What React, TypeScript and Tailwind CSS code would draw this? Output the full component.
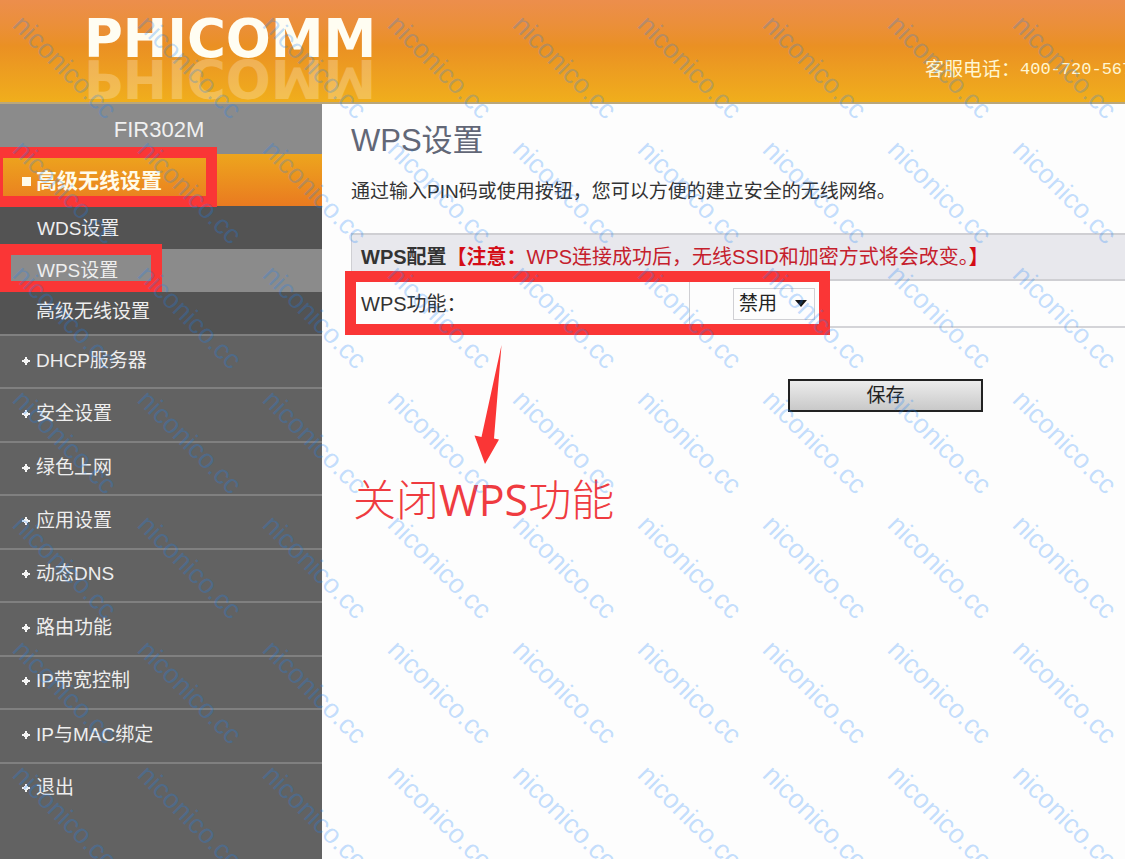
const menu = ['DHCP服务器', '安全设置', '绿色上网', '应用设置', '动态DNS', '路由功能', 'IP带宽控制', 'IP与MAC绑定', '退出'];

const watermarks = Array.from({ length: 63 }, (_, i) => i);

function Logo() {
  return (
    <div className="relative ml-[84px] pt-[14px] font-['DejaVu_Sans',sans-serif] text-[53px] leading-[50px] font-bold text-[#fffdf2]">
      <h1>PHICOMM</h1>
      <div aria-hidden="true" className="absolute left-0 top-[53px] -scale-y-100 opacity-25">
        PHICOMM
      </div>
    </div>
  );
}

function PlusMark() {
  return (
    <svg viewBox="0 0 10 10" className="size-[10px] shrink-0" aria-hidden="true">
      <path d="M4 1h2v2h1v1h2v2H7v1H6v2H4V7H3V6H1V4h2V3h1z" fill="#f4f4f4" />
    </svg>
  );
}

function Sidebar() {
  return (
    <nav className="w-[322px] shrink-0 bg-[#626262] text-[19px] leading-6 text-[#eeeeee]">
      <div className="flex h-[50px] items-center justify-center bg-[#8b8b8b] pt-0.5 pr-1 text-[22px] text-[#f0f0f0]">
        <span>FIR302M</span>
      </div>

      <div className="relative h-[52px] bg-linear-to-b from-[#eda51d] to-[#e97a20]">
        <a href="#wireless" className="flex h-full items-center gap-[5px] pt-0.5 pl-[22px] text-[21px] font-bold text-[#fffbe9]">
          <span className="size-[9px] bg-[#fffbe9]" />
          高级无线设置
        </a>
        <div className="pointer-events-none absolute -top-[7px] left-0 h-[60px] w-[217px] border-[11px] border-l-[3px] border-[#fa3636]" />
      </div>

      <ul className="bg-[#535353]">
        <li>
          <a href="#wds" className="flex h-[43px] items-center pt-0.5 pl-[37px]">WDS设置</a>
        </li>
        <li className="relative bg-[#8b8b8b]">
          <a href="#wps" className="flex h-[43px] items-center pl-[37px]">WPS设置</a>
          <div className="pointer-events-none absolute -top-[5px] left-0 h-[48px] w-[162px] border-[11px] border-[#fa3636]" />
        </li>
        <li>
          <a href="#advanced" className="flex h-[42px] items-center pb-0.5 pl-[36px]">高级无线设置</a>
        </li>
      </ul>

      <ul className="grid min-h-[481px] auto-rows-fr">
        {menu.map((label) => (
          <li key={label} className="border-t-2 border-[#808080]">
            <a href="#menu" className="flex h-full items-center gap-[5px] pb-0.5 pl-[21px]">
              <PlusMark />
              {label}
            </a>
          </li>
        ))}
      </ul>
    </nav>
  );
}

function Content() {
  return (
    <main className="min-w-0 flex-1 pl-[29px] text-[20px] leading-6 text-[#333]">
      <h2 className="pt-[17px] text-[31px] leading-10 text-[#626777]">WPS设置</h2>
      <p className="mt-[19px] text-[19px] whitespace-nowrap">通过输入PIN码或使用按钮，您可以方便的建立安全的无线网络。</p>

      <div className="relative mt-[29px]">
        <table className="w-full border-collapse border-l border-[#cfcfd3]">
          <thead>
            <tr className="h-[46px] border-y-2 border-[#cfcfd3] bg-[#e8e8ed]">
              <th colSpan={2} className="pl-[9px] text-left font-normal whitespace-nowrap text-[#c5202c]">
                <span className="font-bold text-[#333]">WPS配置</span>
                <span className="font-bold text-[#d40d16]">【注意：</span>
                WPS连接成功后，无线SSID和加密方式将会改变。
                <span className="font-bold text-[#d40d16]">】</span>
              </th>
            </tr>
          </thead>
          <tbody>
            <tr className="h-[47px] border-b-2 border-[#d4d4d8]">
              <td className="w-[338px] border-r border-[#cfcfd3] pl-[9px]">
                <label htmlFor="wps">WPS功能：</label>
              </td>
              <td className="pl-[43px]">
                <div className="relative w-[82px]">
                  <select
                    id="wps"
                    className="h-[32px] w-full appearance-none border border-[#d0d0d4] bg-[#fdfdfd] pl-[5px] text-[19px] text-[#222]"
                  >
                    <option>禁用</option>
                    <option>启用</option>
                  </select>
                  <svg
                    viewBox="0 0 12 7"
                    className="pointer-events-none absolute top-[12px] right-[8px] h-[7px] w-[12px]"
                    aria-hidden="true"
                  >
                    <path d="M0 0h12L6 7z" fill="#161616" />
                  </svg>
                </div>
              </td>
            </tr>
          </tbody>
        </table>
        <div className="pointer-events-none absolute top-[38px] -left-[6px] h-[64px] w-[485px] border-[11px] border-[#fa3636]" />
      </div>

      <div className="relative mt-[51px]">
        <button
          type="button"
          className="ml-[437px] flex h-[33px] w-[195px] items-center justify-center border-2 border-[#222] bg-linear-to-b from-[#ececec] to-[#c9c9c9] text-[19px] text-[#222]"
        >
          保存
        </button>
        <div className="absolute -top-[35px] left-[2px] text-[#ef3b40]">
          <svg viewBox="0 0 30 120" className="ml-[120px] h-[120px] w-[30px]" aria-hidden="true">
            <path d="M28.500 1 21 94.500l5 1L12 120 1.500 91.500l7 1.500z" fill="#fa3636" />
          </svg>
          <p className="mt-[8px] font-['Open_Sans','Noto_Sans_CJK_SC',sans-serif] text-[43px] leading-[56px] font-light whitespace-nowrap">
            关闭<span className="font-normal">WPS</span>功能
          </p>
        </div>
      </div>
    </main>
  );
}

function Watermark() {
  return (
    <div
      aria-hidden="true"
      className="pointer-events-none absolute inset-0 grid auto-rows-[125px] grid-cols-[repeat(9,125px)] overflow-hidden text-[27px] leading-[30px] whitespace-nowrap text-[rgba(25,130,250,0.27)]"
    >
      {watermarks.map((i) => (
        <div key={i} className="flex items-center justify-center pt-2 pl-1">
          <span className="rotate-45">niconico.cc</span>
        </div>
      ))}
    </div>
  );
}

export default function App() {
  return (
    <div className="relative flex min-h-screen flex-col overflow-hidden bg-[#fdfdfd] font-['Liberation_Sans','Noto_Sans_CJK_SC',sans-serif]">
      <header className="flex h-[104px] items-start justify-between border-b-2 border-[#b9a77c] bg-linear-to-b from-[#ec8e4c] via-[#ea9023] via-45% to-[#f0ae1c]">
        <Logo />
        <p className="mt-[58px] flex w-[200px] shrink-0 items-center overflow-hidden text-[19px] leading-6 whitespace-nowrap text-[#fff6d2]">
          客服电话：
          <span className="font-['Liberation_Mono',monospace] text-[17px]">400-720-567</span>
        </p>
      </header>
      <div className="flex flex-1">
        <Sidebar />
        <Content />
      </div>
      <Watermark />
    </div>
  );
}
